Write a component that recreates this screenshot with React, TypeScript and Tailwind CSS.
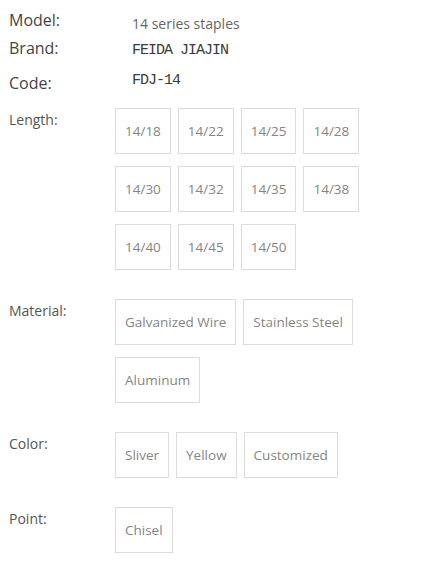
const lengths = ["14/18", "14/22", "14/25", "14/28", "14/30", "14/32", "14/35", "14/38", "14/40", "14/45", "14/50"];

const options = [
  { label: "Length:", values: lengths },
  { label: "Material:", values: ["Galvanized Wire", "Stainless Steel", "Aluminum"] },
  { label: "Color:", values: ["Sliver", "Yellow", "Customized"] },
  { label: "Point:", values: ["Chisel"] },
];

function Chip({ text }: { text: string }) {
  return (
    <span className="h-[46px] px-[9px] flex items-center justify-center border border-[#dcdcdc] text-[13.5px] text-[#858585] mr-[7px] mb-[12px]">
      {text}
    </span>
  );
}

export default function App() {
  return (
    <main className="w-[426px] h-[569px] bg-white pt-[8px] pl-[9px] font-['Open_Sans',sans-serif]">
      <section className="flex flex-col">
        <div className="flex h-[28px]">
          <span className="w-[123px] text-[16px] leading-[24px] text-[#444]">Model:</span>
          <span className="pt-[6px] text-[14px] leading-[20px] text-[#666]">14 series staples</span>
        </div>
        <div className="flex h-[35px]">
          <span className="w-[123px] text-[16px] leading-[24px] text-[#444]">Brand:</span>
          <span className="pt-[5px] text-[15px] leading-[20px] tracking-[-1px] text-[#3a3a3a] font-['Liberation_Mono',monospace]">
            FEIDA JIAJIN
          </span>
        </div>
        <div className="flex h-[37px]">
          <span className="w-[123px] text-[16px] leading-[24px] text-[#444]">Code:</span>
          <span className="text-[15px] leading-[20px] tracking-[-1px] text-[#3a3a3a] font-['Liberation_Mono',monospace]">
            FDJ-14
          </span>
        </div>
      </section>
      <section className="flex flex-col">
        {options.map((opt) => (
          <div key={opt.label} className="flex pb-[17px]">
            <span className="w-[106px] shrink-0 pt-[2px] text-[14px] leading-[20px] text-[#555]">{opt.label}</span>
            <div className="flex flex-wrap w-[300px]">
              {opt.values.map((v) => (
                <Chip key={v} text={v} />
              ))}
            </div>
          </div>
        ))}
      </section>
    </main>
  );
}
